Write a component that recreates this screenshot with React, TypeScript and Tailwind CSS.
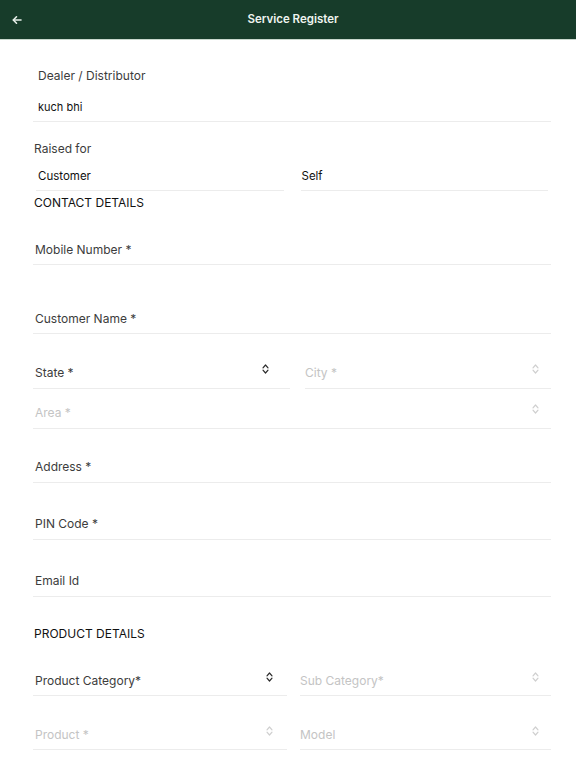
import React from "react";

function Chevrons({ muted }: { muted?: boolean }) {
  return (
    <svg
      width="7"
      height="10"
      viewBox="0 0 7 10"
      fill="none"
      stroke={muted ? "#cfcfcf" : "#2b2b2b"}
      strokeWidth="1.2"
      strokeLinecap="round"
      strokeLinejoin="round"
    >
      <path d="M1 3.8 L3.5 1 L6 3.8" />
      <path d="M1 6.2 L3.5 9 L6 6.2" />
    </svg>
  );
}

function Field({
  label,
  muted,
  select,
  mt,
  pb = "pb-[6px]",
  pl = "pl-[2px]",
  iconPr = "pr-[12px]",
}: {
  label: string;
  muted?: boolean;
  select?: boolean;
  mt: string;
  pb?: string;
  pl?: string;
  iconPr?: string;
}) {
  return (
    <div className={`${mt} ${pb} border-b border-[#ececec] flex items-end justify-between`}>
      <span className={`${pl} text-[12px] leading-4 ${muted ? "text-[#c4c4c4]" : "text-[#3c3c3c]"}`}>{label}</span>
      {select && (
        <span className={`${iconPr} self-end relative -top-[7px]`}>
          <Chevrons muted={muted} />
        </span>
      )}
    </div>
  );
}

export default function App() {
  return (
    <div className="min-h-screen bg-white font-['Inter','Liberation_Sans',sans-serif] text-[#222]">
      {/* top bar */}
      <header className="h-10 bg-[#173c2a] border-b border-[#c8d8cd] flex items-center px-3">
        <svg width="10" height="10" viewBox="0 0 10 10" fill="none" stroke="#e8f0ea" strokeWidth="1.6" strokeLinecap="round" strokeLinejoin="round">
          <path d="M9 5 H1.5" />
          <path d="M4.5 1.8 L1.3 5 L4.5 8.2" />
        </svg>
        <h1 className="flex-1 text-center text-[11.5px] font-semibold text-[#eef4ef]">Service Register</h1>
      </header>

      <main className="pl-[33px] pr-[25px] pb-4">
        {/* dealer */}
        <div className="mt-[28px] pl-[5px] text-[12px] leading-4 text-[#3c3c3c]">Dealer / Distributor</div>
        <div className="mt-[15px] pl-[5px] pb-[6px] border-b border-[#ececec] text-[11px] leading-4 text-[#111]">
          kuch bhi
        </div>

        {/* raised for */}
        <div className="mt-[19px] pl-[1px] text-[12px] leading-4 text-[#3c3c3c]">Raised for</div>
        <div className="mt-[11px] grid grid-cols-2 gap-[17px] pl-[3px] pr-[3px]">
          <div className="pl-[2px] pb-[6px] border-b border-[#ececec] text-[11.5px] leading-4 text-[#111]">Customer</div>
          <div className="pl-[1px] pb-[6px] border-b border-[#ececec] text-[11.5px] leading-4 text-[#111]">Self</div>
        </div>

        <div className="mt-[4px] pl-[1px] text-[12px] leading-4 text-[#111]">CONTACT DETAILS</div>

        <Field label="Mobile Number *" mt="mt-[31px]" />
        <Field label="Customer Name *" mt="mt-[46px]" />

        <div className="grid grid-cols-[257px_1fr] gap-[15px]">
          <Field label="State *" select mt="mt-[31px]" pb="pb-[7px]" iconPr="pr-[21px]" />
          <Field label="City *" muted select mt="mt-[31px]" pb="pb-[7px]" pl="pl-0" />
        </div>
        <Field label="Area *" muted select mt="mt-[16px]" pb="pb-[7px]" />
        <Field label="Address *" mt="mt-[30px]" pb="pb-[7px]" />
        <Field label="PIN Code *" mt="mt-[33px]" pb="pb-[7px]" />
        <Field label="Email Id" mt="mt-[33px]" pb="pb-[7px]" />

        <div className="mt-[29px] pl-[1px] text-[12px] leading-4 text-[#111]">PRODUCT DETAILS</div>

        <div className="grid grid-cols-[254px_1fr] gap-[13px]">
          <Field label="Product Category*" select mt="mt-[31px]" iconPr="pr-[14px]" />
          <Field label="Sub Category*" muted select mt="mt-[31px]" pl="pl-0" />
        </div>
        <div className="grid grid-cols-[254px_1fr] gap-[13px]">
          <Field label="Product *" muted select mt="mt-[31px]" iconPr="pr-[14px]" />
          <Field label="Model" muted select mt="mt-[31px]" pl="pl-0" />
        </div>
      </main>
    </div>
  );
}
